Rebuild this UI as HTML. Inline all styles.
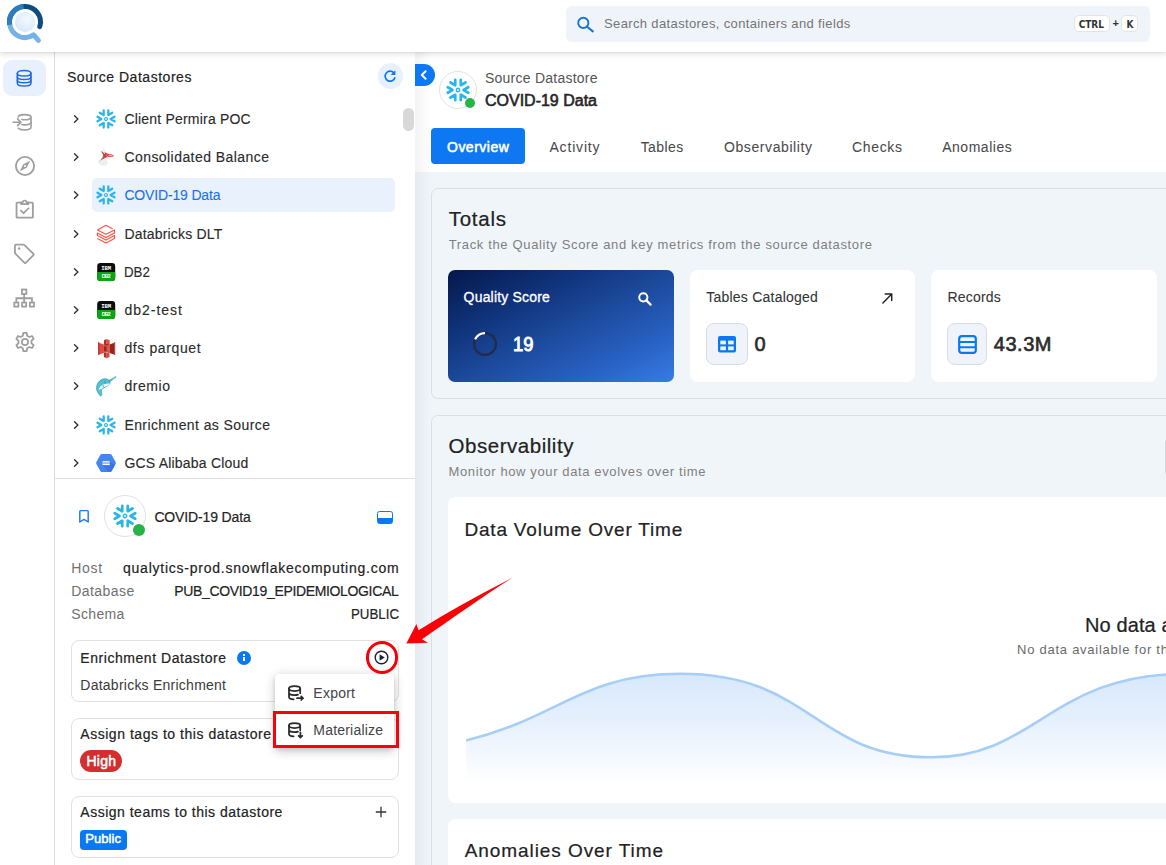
<!DOCTYPE html>
<html lang="en">
<head>
<meta charset="utf-8">
<title>COVID-19 Data - Source Datastore</title>
<style>
*{box-sizing:border-box;margin:0;padding:0}
html,body{width:1166px;height:865px;overflow:hidden;background:#f0f5fa}
body{position:relative;font-family:"Liberation Sans",sans-serif;color:#222;font-size:14px}
.abs{position:absolute}
.t{position:absolute;white-space:nowrap;line-height:20px;height:20px}
svg{position:absolute;overflow:visible}
/* main area */
#main{left:415px;top:52px;width:751px;height:813px;background:#f0f5fa;overflow:hidden}
#mainhead{left:0;top:0;width:751px;height:120px;background:#fff}
#edge{left:0;top:0;width:16px;height:813px;background:linear-gradient(90deg,rgba(120,130,150,.09),rgba(120,130,150,0))}
.card{border:1px solid #d9dfe7;border-radius:7px;background:#f0f5fa}
.wcard{background:#fff;border-radius:8px}
.ibox{background:#f0f4fa;border:1px solid #d6dce4;border-radius:8px}
/* header */
#header{left:0;top:0;width:1166px;height:52px;background:#fff;box-shadow:0 2px 6px rgba(0,0,0,.13),0 0 2px rgba(0,0,0,.10);z-index:20}
#search{left:566px;top:6px;width:584px;height:36px;background:#eff4fa;border-radius:6px}
.kbd{background:#fff;border:1px solid #e3e3e3;border-radius:5px;height:17px}
/* nav */
#nav{left:0;top:52px;width:55px;height:813px;background:#fff;border-right:1px solid #dcdcdc;z-index:10}
#navact{left:3px;top:8px;width:43px;height:36px;border-radius:9px;background:#e9f0fd}
/* tree panel */
#panel{left:55px;top:52px;width:360px;height:813px;background:#fff;z-index:9}
#sel{left:37px;top:126px;width:303px;height:34px;border-radius:5px;background:#e9f1fd}
#refresh{left:323px;top:11px;width:25px;height:26px;border-radius:13px;background:#e9f0fd}
#thumb{left:348px;top:56px;width:11px;height:23px;border-radius:6px;background:#d8d8d8}
#divider{left:0;top:426px;width:360px;height:1px;background:#e0e0e0}
.pcard{left:16px;width:328px;height:62px;border:1px solid #e2e2e2;border-radius:8px;background:#fff}
#menu{left:220px;top:622px;width:119px;height:74px;background:#fff;border-radius:4px;box-shadow:0 2px 4px -1px rgba(0,0,0,.16),0 4px 10px 1px rgba(0,0,0,.10),0 1px 12px 2px rgba(0,0,0,.08)}
#redrect{left:218px;top:659px;width:126px;height:37.3px;border:3.7px solid #fb0007}
#redcirc{left:310.5px;top:589px;width:32.5px;height:32.5px;border:3.2px solid #f40009;border-radius:50%}
.chev{width:7px;height:10px}
</style>
</head>
<body>

<!-- ================= MAIN CONTENT ================= -->
<div id="main" class="abs">
  <div id="mainhead" class="abs"></div>
  <div id="edge" class="abs"></div>
    <!-- collapse handle -->
  <div class="abs" style="left:0;top:12px;width:20px;height:22px;border-radius:0 11px 11px 0;background:#0d78f2"></div>
  <svg style="left:3px;top:17px" width="12" height="12" viewBox="0 0 12 12"><path d="M7.6 2.2 L3.8 6 L7.6 9.8" fill="none" stroke="#fff" stroke-width="2" stroke-linecap="round" stroke-linejoin="round"/></svg>
  <!-- datastore avatar -->
  <div class="abs" style="left:24px;top:19px;width:38px;height:38px;border-radius:50%;border:1px solid #e2e2e2;background:#fff"></div>
  <svg style="left:31px;top:26px" width="24" height="24" viewBox="-12 -12 24 24"><use href="#snow"/></svg>
  <div class="abs" style="left:49.5px;top:45.5px;width:10px;height:10px;border-radius:50%;background:#27b447"></div>
  <!-- active tab -->
  <div class="abs" style="left:16px;top:76px;width:94px;height:36px;border-radius:4px;background:#0d78f2"></div>

  <!-- Totals card -->
  <div class="abs card" style="left:16px;top:136px;width:780px;height:211px"></div>
  <div class="abs" style="left:33px;top:218px;width:226px;height:112px;border-radius:7px;background:linear-gradient(to bottom right,#06174c 0%,#10347c 30%,#1c4a9c 52%,#2862c4 78%,#377ce6 100%)"></div>
  <svg style="left:222px;top:239px" width="16" height="16" viewBox="0 0 16 16"><circle cx="6.3" cy="6.3" r="4.1" fill="none" stroke="#fff" stroke-width="2"/><path d="M9.4 9.4 L13.6 13.6" stroke="#fff" stroke-width="2.2" stroke-linecap="round"/></svg>
  <svg style="left:57px;top:278.7px" width="26" height="26" viewBox="-13 -13 26 26"><circle r="10.9" fill="none" stroke="#232b4b" stroke-width="2.2"/><path d="M0 -10.9 A10.9 10.9 0 0 0 -9.9 -4.6" fill="none" stroke="#fff" stroke-width="2.2"/></svg>

  <div class="abs wcard" style="left:275px;top:218px;width:225px;height:112px"></div>
  <div class="abs ibox" style="left:291px;top:271px;width:42px;height:42px"></div>
  <svg style="left:303px;top:283.5px" width="18" height="17" viewBox="0 0 18 17"><rect x="0" y="0" width="18" height="16.5" rx="2" fill="#0b77f2"/><rect x="2.3" y="4.6" width="5.6" height="3.8" fill="#eef4fb"/><rect x="10.1" y="4.6" width="5.6" height="3.8" fill="#eef4fb"/><rect x="2.3" y="10.4" width="5.6" height="3.8" fill="#eef4fb"/><rect x="10.1" y="10.4" width="5.6" height="3.8" fill="#eef4fb"/></svg>
  <svg style="left:466.6px;top:241.3px" width="10.8" height="10.8" viewBox="0 0 12 12"><path d="M1 11 L10.6 1.4 M3.6 1.2 L10.8 1.2 L10.8 8.4" fill="none" stroke="#222" stroke-width="1.6" stroke-linecap="round" stroke-linejoin="round"/></svg>

  <div class="abs wcard" style="left:516px;top:218px;width:226px;height:112px"></div>
  <div class="abs ibox" style="left:532px;top:271px;width:40px;height:42px"></div>
  <svg style="left:542.5px;top:282.5px" width="19" height="19" viewBox="0 0 19 19"><rect x="1.2" y="1.2" width="16.6" height="16.6" rx="2.6" fill="none" stroke="#0b77f2" stroke-width="2.2"/><path d="M1.5 7 H17.5 M1.5 12.2 H17.5" stroke="#0b77f2" stroke-width="2"/></svg>
  <div class="abs wcard" style="left:758px;top:218px;width:226px;height:112px"></div>

  <!-- Observability card -->
  <div class="abs card" style="left:16px;top:363px;width:780px;height:520px"></div>
  <div class="abs" style="left:750px;top:385.5px;width:30px;height:38px;border:1px solid #d4d9e0;border-radius:4px;background:#f0f5fa"></div>
  <div class="abs wcard" style="left:33px;top:445px;width:760px;height:305.5px"></div>
  <svg style="left:0;top:600px" width="751" height="140" viewBox="415 652 751 140">
    <defs><linearGradient id="fillg" x1="0" y1="0" x2="0" y2="1"><stop offset="0" stop-color="#d7e8fc"/><stop offset="0.5" stop-color="#e9f2fd"/><stop offset="1" stop-color="#ffffff"/></linearGradient></defs>
    <path d="M466.2 740.4 C558.8 718 582.1 673.8 680 673.8 C813.4 673.8 813.6 757.3 932 757.3 C1036.6 757.3 1050.1 673.8 1185.5 673.8 L1185.5 784 L466.2 784 Z" fill="url(#fillg)"/>
    <path d="M466.2 740.4 C558.8 718 582.1 673.8 680 673.8 C813.4 673.8 813.6 757.3 932 757.3 C1036.6 757.3 1050.1 673.8 1185.5 673.8" fill="none" stroke="#a7cef7" stroke-width="2.6"/>
  </svg>
  <div class="abs wcard" style="left:33px;top:767px;width:760px;height:120px"></div>
</div>

<!-- ================= TREE PANEL ================= -->
<div id="panel" class="abs">
    <div id="sel" class="abs"></div>
  <div id="refresh" class="abs"></div>
  <svg style="left:327.9px;top:16.6px" width="14" height="14" viewBox="0 0 14 14"><path d="M11.2 4.3 A5 5 0 1 0 12 8.3" fill="none" stroke="#0b78f2" stroke-width="1.7"/><path d="M12.4 1.2 L12.4 6 L7.6 6 Z" fill="#0b78f2"/></svg>
  <div id="thumb" class="abs"></div>
  <div id="divider" class="abs"></div>
  <svg style="left:17.6px;top:62.0px" width="8" height="10" viewBox="0 0 8 10"><path d="M1.5 1.7 L4.9 5 L1.5 8.3" fill="none" stroke="#333" stroke-width="1.4" stroke-linecap="round" stroke-linejoin="round"/></svg>
  <svg style="left:17.6px;top:100.2px" width="8" height="10" viewBox="0 0 8 10"><path d="M1.5 1.7 L4.9 5 L1.5 8.3" fill="none" stroke="#333" stroke-width="1.4" stroke-linecap="round" stroke-linejoin="round"/></svg>
  <svg style="left:17.6px;top:138.4px" width="8" height="10" viewBox="0 0 8 10"><path d="M1.5 1.7 L4.9 5 L1.5 8.3" fill="none" stroke="#333" stroke-width="1.4" stroke-linecap="round" stroke-linejoin="round"/></svg>
  <svg style="left:17.6px;top:176.6px" width="8" height="10" viewBox="0 0 8 10"><path d="M1.5 1.7 L4.9 5 L1.5 8.3" fill="none" stroke="#333" stroke-width="1.4" stroke-linecap="round" stroke-linejoin="round"/></svg>
  <svg style="left:17.6px;top:214.8px" width="8" height="10" viewBox="0 0 8 10"><path d="M1.5 1.7 L4.9 5 L1.5 8.3" fill="none" stroke="#333" stroke-width="1.4" stroke-linecap="round" stroke-linejoin="round"/></svg>
  <svg style="left:17.6px;top:253.0px" width="8" height="10" viewBox="0 0 8 10"><path d="M1.5 1.7 L4.9 5 L1.5 8.3" fill="none" stroke="#333" stroke-width="1.4" stroke-linecap="round" stroke-linejoin="round"/></svg>
  <svg style="left:17.6px;top:291.2px" width="8" height="10" viewBox="0 0 8 10"><path d="M1.5 1.7 L4.9 5 L1.5 8.3" fill="none" stroke="#333" stroke-width="1.4" stroke-linecap="round" stroke-linejoin="round"/></svg>
  <svg style="left:17.6px;top:329.4px" width="8" height="10" viewBox="0 0 8 10"><path d="M1.5 1.7 L4.9 5 L1.5 8.3" fill="none" stroke="#333" stroke-width="1.4" stroke-linecap="round" stroke-linejoin="round"/></svg>
  <svg style="left:17.6px;top:367.6px" width="8" height="10" viewBox="0 0 8 10"><path d="M1.5 1.7 L4.9 5 L1.5 8.3" fill="none" stroke="#333" stroke-width="1.4" stroke-linecap="round" stroke-linejoin="round"/></svg>
  <svg style="left:17.6px;top:405.8px" width="8" height="10" viewBox="0 0 8 10"><path d="M1.5 1.7 L4.9 5 L1.5 8.3" fill="none" stroke="#333" stroke-width="1.4" stroke-linecap="round" stroke-linejoin="round"/></svg>
  <svg style="left:41px;top:57.0px" width="20" height="20" viewBox="-12 -12 24 24"><use href="#snow"/></svg>
  <svg style="left:41px;top:95.2px" width="20" height="20" viewBox="0 0 20 20"><path d="M6.6 2 C8.4 1.6 9.6 3 9.4 5 L8.8 11 C10.4 12.4 11.6 14 11.8 16.2 C11.4 18 9 18.8 6.6 18.4 C4 18 2 16.4 2 14.4 C2.6 13.4 4.4 11.6 6 10 Z" fill="#e3eaee" opacity=".75"/><path d="M4.6 3.6 C6.2 5.2 8 6.2 10.4 6.6 C13 6.9 15.8 7.3 18 8.4 C18.3 9.3 16.6 9.9 14.4 10 C12.4 10 10.6 10.2 9 11 C7 12 5.2 13.2 3.6 14 C5.4 12 6.8 10.2 7.6 8.4 C6.6 7 5.4 5.4 4.6 3.6Z" fill="#cf3a38" opacity=".9"/><circle cx="9.3" cy="7.9" r="2.3" fill="#cf3a38" opacity=".85"/><path d="M13 7.6 C15 7.8 17 8.2 17.4 8.8 C17 9.4 15 9.4 12.6 9.2 Z" fill="#fff" opacity=".55"/><circle cx="8.4" cy="6.4" r=".55" fill="#fff" opacity=".8"/><circle cx="10.6" cy="8" r=".5" fill="#fff" opacity=".7"/><circle cx="11.4" cy="9.6" r=".5" fill="#fff" opacity=".7"/></svg>
  <svg style="left:41px;top:133.4px" width="20" height="20" viewBox="-12 -12 24 24"><use href="#snow"/></svg>
  <svg style="left:41px;top:171.6px" width="20" height="20" viewBox="0 0 20 20"><g fill="none" stroke="#ff4433" stroke-width="1.15" stroke-linejoin="round" opacity=".92"><path d="M16.6 4.8 L9.9 1.3 L1.5 5.9 L9.9 10.3 L18.5 5.9 V9 L9.9 13.5 L1.4 9 V11.6 L9.9 16.1 L18.5 11.6 V14.5 L9.9 19.1 L1.4 14.5"/></g></svg>
  <svg style="left:41px;top:209.8px" width="20" height="20" viewBox="0 0 20 20"><rect x="1.2" y="1" width="18" height="18" rx="3.2" fill="#0c0c0c"/><path d="M1.2 10 H19.2 V15.8 A3.2 3.2 0 0 1 16 19 H4.4 A3.2 3.2 0 0 1 1.2 15.8 Z" fill="#0aa512"/><text x="10.2" y="8.1" font-family="Liberation Mono, monospace" font-weight="700" font-size="5.6" fill="#fff" text-anchor="middle" textLength="10">IBM</text><text x="10.2" y="16.3" font-family="Liberation Sans, sans-serif" font-weight="700" font-size="5.2" fill="#fff" text-anchor="middle" textLength="9">DB2</text></svg>
  <svg style="left:41px;top:248.0px" width="20" height="20" viewBox="0 0 20 20"><rect x="1.2" y="1" width="18" height="18" rx="3.2" fill="#0c0c0c"/><path d="M1.2 10 H19.2 V15.8 A3.2 3.2 0 0 1 16 19 H4.4 A3.2 3.2 0 0 1 1.2 15.8 Z" fill="#0aa512"/><text x="10.2" y="8.1" font-family="Liberation Mono, monospace" font-weight="700" font-size="5.6" fill="#fff" text-anchor="middle" textLength="10">IBM</text><text x="10.2" y="16.3" font-family="Liberation Sans, sans-serif" font-weight="700" font-size="5.2" fill="#fff" text-anchor="middle" textLength="9">DB2</text></svg>
  <svg style="left:41px;top:286.2px" width="20" height="21" viewBox="0 0 20 21"><path d="M2.1 4.5 L7.9 6.5 V14.9 L2.1 16.8 Z" fill="#de4a3f"/><path d="M2.1 4.5 L3.3 4.1 V17.2 L2.1 16.8 Z" fill="#b7352c"/><path d="M19.1 4.5 L13.4 6.5 V14.9 L19.1 16.8 Z" fill="#8a2a20"/><path d="M19.1 4.5 L18 4.1 V17.2 L19.1 16.8 Z" fill="#cf4338"/><rect x="7.9" y="6" width="5.6" height="9" fill="#d9483d"/><path d="M7.9 2.2 L10.7 0.9 V6.2 H7.9 Z" fill="#a8322a"/><path d="M13.7 2.2 L10.7 0.9 V6.2 H13.7 Z" fill="#e24c41"/><path d="M7.9 6.2 H13.7 L10.7 6.9 Z" fill="#7a2219"/><path d="M7.9 14.9 H10.7 V20.3 L7.9 19 Z" fill="#a8322a"/><path d="M13.5 14.9 H10.7 V20.3 L13.5 19 Z" fill="#d9483d"/><path d="M7.9 14.9 L10.7 14.3 L13.5 14.9 Z" fill="#f3b8b2"/><rect x="7.9" y="8.4" width="2.8" height="4.6" fill="#8a2a20"/><rect x="10.7" y="8.4" width="2.8" height="4.6" fill="#e5544a"/></svg>
  <svg style="left:41px;top:324.4px" width="20" height="21" viewBox="0 0 20 21"><path d="M12.6 4.6 L19.9 0.4 L20.2 1 L13.8 6 Z" fill="#4fc3d6" stroke="#3a8fa2" stroke-width=".4"/><path d="M13.1 4.3 C11 2.4 7 2 3.8 4.8 C0.2 8 -0.2 12.5 1.4 15.8 C2.3 17.6 3.6 19 4.7 20.2 C5.6 19.5 6 18.6 5.7 17.4 C5.5 16 5.2 15 5.6 13.6 C6.4 12.4 8 11.8 9.6 10.9 C11.4 10 13 9 13.8 7.6 C14.1 6.8 13.9 5.6 13.1 4.3 Z" fill="#4fc3d6" stroke="#2f7f92" stroke-width=".55"/><path d="M2.6 14.2 C3 11.4 5.2 9.2 8 8.2 C10 7.6 12 7.6 13.6 7.4 C13 9 11 10 9.2 10.8 C7.6 11.5 6 12.2 5.2 13.4 C4.4 13 3.4 13.4 2.6 14.2 Z" fill="#f2fbfc"/><path d="M6.2 9.6 L8 9.4 L7.6 11.4 Z" fill="#3aa9bd"/><circle cx="9" cy="6.1" r=".6" fill="#2a7485"/></svg>
  <svg style="left:41px;top:362.6px" width="20" height="20" viewBox="-12 -12 24 24"><use href="#snow"/></svg>
  <svg style="left:41px;top:400.8px" width="20" height="20" viewBox="0 0 20 20"><path d="M5.7 1 H14.3 Q15.2 1 15.7 1.9 L19.6 9 Q20.1 10 19.6 11 L15.7 18.1 Q15.2 19 14.3 19 H5.7 Q4.8 19 4.3 18.1 L0.4 11 Q-0.1 10 0.4 9 L4.3 1.9 Q4.8 1 5.7 1Z" fill="#4485f3"/><path d="M13.7 8.2 L18.9 12.2 L15.7 18.1 Q15.2 19 14.3 19 H12.6 L6.5 12.1 H13.7Z" fill="#3a73dc" opacity=".8"/><rect x="6.5" y="8.2" width="7.2" height="1.35" fill="#fff"/><rect x="6.5" y="10.75" width="7.2" height="1.35" fill="#fff"/><rect x="6.5" y="9.55" width="7.2" height="1.2" fill="#a9c6f7"/></svg>
  <!-- selected datastore summary -->
  <svg style="left:22.7px;top:456.6px" width="13" height="15" viewBox="0 0 13 15"><path d="M1.8 2.6 Q1.8 1.6 2.8 1.6 H9.2 Q10.2 1.6 10.2 2.6 V13 L6 10.4 L1.8 13 Z" fill="none" stroke="#1f78f5" stroke-width="1.45" stroke-linejoin="round"/></svg>
  <div class="abs" style="left:49px;top:443px;width:42px;height:42px;border-radius:50%;border:1px solid #e2e2e2;background:#fff"></div>
  <svg style="left:58px;top:452px" width="24" height="24" viewBox="-12 -12 24 24"><use href="#snow"/></svg>
  <div class="abs" style="left:77.7px;top:471.7px;width:12.6px;height:12.6px;border-radius:50%;background:#27b447"></div>
  <div class="abs" style="left:321.8px;top:458.9px;width:16.6px;height:13.2px;border:1.7px solid #0678f0;border-radius:2.5px;background:linear-gradient(#fff 0,#fff 58%,#0678f0 58%)"></div>
  <div class="abs pcard" style="top:588px"></div>
  <div class="abs pcard" style="top:666px"></div>
  <div class="abs pcard" style="top:744px"></div>
  <!-- info icon -->
  <div class="abs" style="left:181.7px;top:598.5px;width:14.2px;height:14.2px;border-radius:50%;background:#0a78f2"></div>
  <div class="abs" style="left:187.9px;top:602px;width:1.9px;height:1.7px;background:#fff"></div>
  <div class="abs" style="left:187.9px;top:605.1px;width:1.9px;height:4.1px;background:#fff"></div>
  <!-- play icon -->
  <svg style="left:318px;top:597px" width="17" height="17" viewBox="-8.5 -8.5 17 17"><circle r="6.3" fill="none" stroke="#1c2030" stroke-width="1.4"/><path d="M-1.9 -3.2 L3.2 0 L-1.9 3.2 Z" fill="#1c2030"/></svg>
  <!-- chips -->
  <div class="abs" style="left:25px;top:698px;width:42px;height:22px;border-radius:11px;background:#d32f2f"></div>
  <div class="abs" style="left:25px;top:778.3px;width:47px;height:19.5px;border-radius:4px;background:#0a78f2"></div>
  <svg style="left:320px;top:754px" width="12" height="12" viewBox="0 0 12 12"><path d="M6 0.8 V11.2 M0.8 6 H11.2" stroke="#333" stroke-width="1.3"/></svg>
  <!-- popup menu -->
  <div id="menu" class="abs"></div>
  <svg style="left:232px;top:632.5px" width="18" height="17" viewBox="0 0 18 17"><g fill="none" stroke="#2a2a2a" stroke-width="1.75" stroke-linecap="round"><ellipse cx="7.6" cy="3.6" rx="5.6" ry="2.4"/><path d="M2 3.6 V12 C2 13.3 4 14.2 6.6 14.4 M13.2 3.6 V8.2 M2 7.8 C2 9.1 4.4 10.1 7.6 10.1 C8.8 10.1 10 10 11 9.6"/><path d="M10 13.2 H16 M14.2 11.4 L16 13.2 L14.2 15"/></g></svg>
  <svg style="left:232px;top:669.5px" width="18" height="17" viewBox="0 0 18 17"><g fill="none" stroke="#2a2a2a" stroke-width="1.75" stroke-linecap="round"><ellipse cx="7.6" cy="3.6" rx="5.6" ry="2.4"/><path d="M2 3.6 V12 C2 13.3 4 14.2 6.6 14.4 M13.2 3.6 V8.2 M2 7.8 C2 9.1 4.4 10.1 7.6 10.1 C8.8 10.1 10 10 11 9.6"/><path d="M13.4 10.4 V15.6 M11.6 13.8 L13.4 15.6 L15.2 13.8"/></g></svg>
</div>

<!-- ================= NAV ================= -->
<div id="nav" class="abs">
  <div id="navact" class="abs"></div>
    <!-- datastores (active) -->
  <svg style="left:14.3px;top:15.7px" width="20.3" height="20.3" viewBox="0 0 22 22"><g fill="none" stroke="#1a6be0" stroke-width="1.65" stroke-linecap="round"><ellipse cx="11" cy="5.6" rx="7.4" ry="3"/><path d="M3.6 5.6 V16.4 C3.6 18.1 6.9 19.4 11 19.4 C15.1 19.4 18.4 18.1 18.4 16.4 V5.6"/><path d="M3.6 9.4 C3.6 11.1 6.9 12.4 11 12.4 C15.1 12.4 18.4 11.1 18.4 9.4 M3.6 13 C3.6 14.7 6.9 16 11 16 C15.1 16 18.4 14.7 18.4 13"/></g></svg>
  <!-- enrichment datastores -->
  <svg style="left:12.4px;top:59.5px" width="20.5" height="20.5" viewBox="0 0 22 22"><g fill="none" stroke="#9e9e9e" stroke-width="1.7" stroke-linecap="round" stroke-linejoin="round"><path d="M6.6 5.4 C6.8 3.8 9.8 2.8 13.4 2.8 C17.4 2.8 20.4 4 20.4 5.6 C20.4 7.2 17.4 8.4 13.4 8.4 C12.4 8.4 11.4 8.3 10.6 8.1"/><path d="M20.4 5.6 V16.4 C20.4 18 17.4 19.2 13.4 19.2 C10.4 19.2 7.8 18.5 6.8 17.4"/><path d="M20.4 11 C20.4 12.6 17.4 13.8 13.4 13.8 C12.4 13.8 11.4 13.7 10.6 13.5"/><path d="M1.2 11 H9.4 M6 7.4 L9.6 11 L6 14.6"/></g></svg>
  <!-- explore -->
  <svg style="left:13.9px;top:103px" width="22" height="22" viewBox="0 0 22 22"><circle cx="11" cy="11" r="9.1" fill="none" stroke="#9e9e9e" stroke-width="1.85"/><path d="M16.2 5.8 L12.7 12.7 L5.8 16.2 L9.3 9.3 Z" fill="#9e9e9e"/><circle cx="11" cy="11" r="1.05" fill="#fff"/></svg>
  <!-- checks -->
  <svg style="left:13.8px;top:146.8px" width="21.4" height="20.4" viewBox="0 0 22 22" preserveAspectRatio="none"><g fill="none" stroke="#9e9e9e" stroke-width="1.85" stroke-linejoin="round"><path d="M7.4 3.8 H3.4 Q2.6 3.8 2.6 4.6 V19.4 Q2.6 20.2 3.4 20.2 H18.6 Q19.4 20.2 19.4 19.4 V4.6 Q19.4 3.8 18.6 3.8 H14.6"/><path d="M7.4 5.6 V3.6 H9 C9 2.4 9.8 1.6 11 1.6 C12.2 1.6 13 2.4 13 3.6 H14.6 V5.6 Z"/><path d="M7 12.6 L9.8 15.2 L15 10" stroke-linecap="round"/></g></svg>
  <!-- tags -->
  <svg style="left:13px;top:190px" width="23" height="23" viewBox="0 0 23 23"><path d="M1.9 3.6 Q1.9 2.6 2.9 2.6 H10.4 Q11 2.6 11.5 3.1 L20.4 11.9 Q21 12.5 20.4 13.1 L12.7 20.9 Q12.1 21.5 11.5 20.9 L2.4 11.7 Q1.9 11.2 1.9 10.6 Z" fill="none" stroke="#9e9e9e" stroke-width="1.8" stroke-linejoin="round"/><circle cx="6.1" cy="6.6" r="1.25" fill="#9e9e9e"/></svg>
  <!-- org chart -->
  <svg style="left:13.45px;top:235.5px" width="22.3" height="20.5" viewBox="0 0 24 22"><g fill="none" stroke="#9e9e9e" stroke-width="1.9"><rect x="9.6" y="1.6" width="4.8" height="4.8"/><rect x="1.4" y="15.6" width="4.4" height="4.4"/><rect x="9.8" y="15.6" width="4.4" height="4.4"/><rect x="18.2" y="15.6" width="4.4" height="4.4"/><path d="M12 6.4 V15.6 M3.6 15.6 V11 H20.4 V15.6"/></g></svg>
  <!-- settings -->
  <svg style="left:13.75px;top:279px" width="22" height="22" viewBox="-11 -11 22 22"><g fill="none" stroke="#9e9e9e" stroke-width="1.75" stroke-linejoin="round"><circle r="3.1"/><path d="M2.15 -6.24 L1.68 -9.05 L-1.68 -9.05 L-2.15 -6.24 L-4.33 -4.98 L-7.00 -5.97 L-8.67 -3.07 L-6.48 -1.26 L-6.48 1.26 L-8.67 3.07 L-7.00 5.97 L-4.33 4.98 L-2.15 6.24 L-1.68 9.05 L1.68 9.05 L2.15 6.24 L4.33 4.98 L7.00 5.97 L8.67 3.07 L6.48 1.26 L6.48 -1.26 L8.67 -3.07 L7.00 -5.97 L4.33 -4.98 Z"/></g></svg>
</div>

<!-- ================= HEADER ================= -->
<div id="header" class="abs">
    <!-- logo -->
  <svg style="left:0;top:0" width="52" height="52" viewBox="0 0 52 52">
    <defs><radialGradient id="lg" cx="0.6" cy="0.35" r="0.75"><stop offset="0" stop-color="#f4f9fe"/><stop offset="1" stop-color="#d3e7f9"/></radialGradient></defs>
    <circle cx="25" cy="22" r="10.2" fill="url(#lg)"/>
    <g fill="none" stroke-width="5">
      <path d="M9.65 24.2 A15.5 15.5 0 0 0 33.6 34.9 L38.4 40.4" stroke="#76b3e5" stroke-linecap="round" stroke-linejoin="round"/>
      <path d="M9.65 24.6 A15.5 15.5 0 0 1 24 6.53" stroke="#2d7cbe"/>
      <path d="M23.4 6.58 A15.5 15.5 0 0 1 39.8 26.6" stroke="#0f4c81" stroke-linecap="round"/>
      <path d="M9.65 24.6 A15.5 15.5 0 0 1 23.6 6.56" stroke="#2d7cbe"/>
    </g>
  </svg>
  <div id="search" class="abs"></div>
  <svg style="left:576px;top:15.5px" width="19" height="17" viewBox="0 0 19 17"><circle cx="7.3" cy="6.9" r="5.1" fill="none" stroke="#1976d2" stroke-width="1.9"/><path d="M11.1 10.7 L16.8 15.4" stroke="#1976d2" stroke-width="2.1" stroke-linecap="round"/></svg>
  <div class="abs kbd" style="left:1073.5px;top:15.2px;width:36px"></div>
  <div class="abs kbd" style="left:1121px;top:15.2px;width:16.6px"></div>
</div>

<!-- ================= OVERLAYS ================= -->
<svg width="0" height="0" style="left:0;top:0"><defs>
  <g id="snow" fill="none" stroke="#29b5e8" stroke-linecap="round" stroke-linejoin="round">
    <path id="arm" stroke-width="2.7" d="M10.26 -2.75 L5.5 0 L10.26 2.75"/>
    <use href="#arm" transform="rotate(60)"/><use href="#arm" transform="rotate(120)"/><use href="#arm" transform="rotate(180)"/><use href="#arm" transform="rotate(240)"/><use href="#arm" transform="rotate(300)"/>
    <circle r="1.75" stroke-width="1.3" fill="#d9f1fb"/>
  </g>
</defs></svg>
<!-- annotation: red arrow, circle, rectangle -->
<svg style="left:0;top:0;z-index:40;pointer-events:none" width="1166" height="865" viewBox="0 0 1166 865">
  <path d="M512.8 577.5 C480 594 446 613 418.6 630.2 L416.4 624 L406.3 643.6 L428 642.7 L422 639.2 C450 620 482 597 512.8 577.5 Z" fill="#fb0007"/>
</svg>
<div id="redcirc" class="abs" style="left:365.5px;top:641px;z-index:40"></div>
<div id="redrect" class="abs" style="left:273px;top:711px;z-index:40"></div>

<!-- ================= TEXT ================= -->
<div class="abs" style="left:0;top:0;width:1166px;height:865px;z-index:30;overflow:hidden">
<span class="t" style="left:604.0px;top:14.0px;font-size:13px;color:#757575;letter-spacing:0.367px">Search datastores, containers and fields</span>
<span class="t" style="left:67.0px;top:67.3px;font-size:14px;color:#222;letter-spacing:0.528px;-webkit-text-stroke:0.18px #222">Source Datastores</span>
<span class="t" style="left:124.4px;top:108.9px;font-size:14px;color:#2a2a2a;letter-spacing:0.199px;-webkit-text-stroke:0.12px #2a2a2a">Client Permira POC</span>
<span class="t" style="left:124.4px;top:147.1px;font-size:14px;color:#2a2a2a;letter-spacing:0.441px;-webkit-text-stroke:0.12px #2a2a2a">Consolidated Balance</span>
<span class="t" style="left:124.4px;top:185.3px;font-size:14px;color:#1a73e8;letter-spacing:-0.162px;-webkit-text-stroke:0.1px #1a73e8">COVID-19 Data</span>
<span class="t" style="left:124.4px;top:223.5px;font-size:14px;color:#2a2a2a;letter-spacing:0.189px;-webkit-text-stroke:0.12px #2a2a2a">Databricks DLT</span>
<span class="t" style="left:124.4px;top:261.7px;font-size:14px;color:#2a2a2a;letter-spacing:0.000px;display:inline-block;transform-origin:0 50%;transform:scaleX(0.9473);-webkit-text-stroke:0.12px #2a2a2a">DB2</span>
<span class="t" style="left:124.4px;top:299.9px;font-size:14px;color:#2a2a2a;letter-spacing:1.001px;-webkit-text-stroke:0.12px #2a2a2a">db2-test</span>
<span class="t" style="left:124.4px;top:338.1px;font-size:14px;color:#2a2a2a;letter-spacing:0.614px;-webkit-text-stroke:0.12px #2a2a2a">dfs parquet</span>
<span class="t" style="left:124.4px;top:376.3px;font-size:14px;color:#2a2a2a;letter-spacing:0.561px;-webkit-text-stroke:0.12px #2a2a2a">dremio</span>
<span class="t" style="left:124.4px;top:414.5px;font-size:14px;color:#2a2a2a;letter-spacing:0.414px;-webkit-text-stroke:0.12px #2a2a2a">Enrichment as Source</span>
<span class="t" style="left:124.4px;top:452.7px;font-size:14px;color:#2a2a2a;letter-spacing:0.204px;-webkit-text-stroke:0.12px #2a2a2a">GCS Alibaba Cloud</span>
<span class="t" style="left:154.4px;top:506.9px;font-size:14px;color:#222;letter-spacing:-0.146px;-webkit-text-stroke:0.18px #222">COVID-19 Data</span>
<span class="t" style="left:71.3px;top:558.0px;font-size:14px;color:#707070;letter-spacing:0.701px">Host</span>
<span class="t" style="left:123.0px;top:558.0px;font-size:14px;color:#222;letter-spacing:0.763px;-webkit-text-stroke:0.18px #222">qualytics-prod.snowflakecomputing.com</span>
<span class="t" style="left:71.3px;top:580.9px;font-size:14px;color:#707070;letter-spacing:0.423px">Database</span>
<span class="t" style="left:174.3px;top:580.9px;font-size:14px;color:#222;letter-spacing:-0.347px;-webkit-text-stroke:0.18px #222">PUB_COVID19_EPIDEMIOLOGICAL</span>
<span class="t" style="left:71.3px;top:603.7px;font-size:14px;color:#707070;letter-spacing:0.348px">Schema</span>
<span class="t" style="left:350.7px;top:603.7px;font-size:14px;color:#222;letter-spacing:0.000px;display:inline-block;transform-origin:0 50%;transform:scaleX(0.9490);-webkit-text-stroke:0.18px #222">PUBLIC</span>
<span class="t" style="left:80.3px;top:648.4px;font-size:14px;color:#222;letter-spacing:0.547px;-webkit-text-stroke:0.2px #222">Enrichment Datastore</span>
<span class="t" style="left:80.3px;top:675.1px;font-size:14px;color:#3a3a3a;letter-spacing:0.244px">Databricks Enrichment</span>
<span class="t" style="left:80.3px;top:723.9px;font-size:14px;color:#222;letter-spacing:0.529px;-webkit-text-stroke:0.2px #222">Assign tags to this datastore</span>
<span class="t" style="left:86.5px;top:750.7px;font-size:14px;color:#fff;letter-spacing:0.234px;-webkit-text-stroke:0.5px #fff">High</span>
<span class="t" style="left:80.3px;top:801.7px;font-size:14px;color:#222;letter-spacing:0.502px;-webkit-text-stroke:0.2px #222">Assign teams to this datastore</span>
<span class="t" style="left:85.2px;top:829.3px;font-size:13px;color:#fff;letter-spacing:0.076px;-webkit-text-stroke:0.5px #fff">Public</span>
<span class="t" style="left:313.3px;top:683.0px;font-size:14px;color:#444;letter-spacing:0.246px">Export</span>
<span class="t" style="left:313.3px;top:719.6px;font-size:14px;color:#444;letter-spacing:0.200px">Materialize</span>
<span class="t" style="left:485.0px;top:67.9px;font-size:14px;color:#555;letter-spacing:0.236px">Source Datastore</span>
<span class="t" style="left:485.0px;top:90.5px;font-size:16px;color:#262626;letter-spacing:-0.004px;-webkit-text-stroke:0.6px #262626">COVID-19 Data</span>
<span class="t" style="left:447.0px;top:137.1px;font-size:14px;color:#fff;letter-spacing:0.492px;-webkit-text-stroke:0.55px #fff">Overview</span>
<span class="t" style="left:549.4px;top:137.1px;font-size:14px;color:#4a4a4a;letter-spacing:0.837px;-webkit-text-stroke:0.05px #4a4a4a">Activity</span>
<span class="t" style="left:640.7px;top:137.1px;font-size:14px;color:#4a4a4a;letter-spacing:0.406px;-webkit-text-stroke:0.05px #4a4a4a">Tables</span>
<span class="t" style="left:724.0px;top:137.1px;font-size:14px;color:#4a4a4a;letter-spacing:0.590px;-webkit-text-stroke:0.05px #4a4a4a">Observability</span>
<span class="t" style="left:852.0px;top:137.1px;font-size:14px;color:#4a4a4a;letter-spacing:0.662px;-webkit-text-stroke:0.05px #4a4a4a">Checks</span>
<span class="t" style="left:942.2px;top:137.1px;font-size:14px;color:#4a4a4a;letter-spacing:0.516px;-webkit-text-stroke:0.05px #4a4a4a">Anomalies</span>
<span class="t" style="left:448.7px;top:209.2px;font-size:20.5px;color:#222;letter-spacing:0.748px;-webkit-text-stroke:0.22px #222">Totals</span>
<span class="t" style="left:448.7px;top:235.0px;font-size:13px;color:#808080;letter-spacing:0.649px">Track the Quality Score and key metrics from the source datastore</span>
<span class="t" style="left:463.6px;top:287.1px;font-size:14px;color:#fff;letter-spacing:0.179px;-webkit-text-stroke:0.32px #fff">Quality Score</span>
<span class="t" style="left:512.5px;top:334.1px;font-size:20px;color:#fff;letter-spacing:0.000px;display:inline-block;transform-origin:0 50%;transform:scaleX(0.9213);-webkit-text-stroke:0.9px #fff">19</span>
<span class="t" style="left:706.2px;top:287.3px;font-size:14px;color:#333;letter-spacing:0.234px;-webkit-text-stroke:0.08px #333">Tables Cataloged</span>
<span class="t" style="left:754.6px;top:333.8px;font-size:20px;color:#2c2c2c;letter-spacing:0.000px;-webkit-text-stroke:0.65px #2c2c2c">0</span>
<span class="t" style="left:947.5px;top:287.3px;font-size:14px;color:#333;letter-spacing:0.177px;-webkit-text-stroke:0.08px #333">Records</span>
<span class="t" style="left:993.8px;top:334.1px;font-size:20px;color:#2c2c2c;letter-spacing:0.527px;-webkit-text-stroke:0.65px #2c2c2c">43.3M</span>
<span class="t" style="left:448.5px;top:435.8px;font-size:20.5px;color:#222;letter-spacing:0.533px;-webkit-text-stroke:0.22px #222">Observability</span>
<span class="t" style="left:448.5px;top:461.5px;font-size:13px;color:#808080;letter-spacing:0.619px">Monitor how your data evolves over time</span>
<span class="t" style="left:464.4px;top:519.9px;font-size:19px;color:#222;letter-spacing:0.810px;-webkit-text-stroke:0.2px #222">Data Volume Over Time</span>
<span class="t" style="left:1084.9px;top:615.1px;font-size:20px;color:#222;letter-spacing:0.124px;-webkit-text-stroke:0.22px #222">No data available</span>
<span class="t" style="left:1017.0px;top:640.3px;font-size:13px;color:#6a6a6a;letter-spacing:0.749px">No data available for the selected timeframe and filters</span>
<span class="t" style="left:464.7px;top:841.4px;font-size:19px;color:#222;letter-spacing:0.926px;-webkit-text-stroke:0.2px #222">Anomalies Over Time</span>
<span class="t" style="left:1112.5px;top:13.4px;font-size:11px;color:#333;letter-spacing:0.000px;font-weight:700">+</span>
<span class="t" style="left:1078.7px;top:14.6px;font-size:10px;color:#333;letter-spacing:-0.069px;font-weight:700;font-family:'DejaVu Sans Condensed','DejaVu Sans',sans-serif">CTRL</span>
<span class="t" style="left:1126.6px;top:14.6px;font-size:10px;color:#333;letter-spacing:0.000px;font-weight:700;font-family:'DejaVu Sans Condensed','DejaVu Sans',sans-serif">K</span>
</div>
</body>
</html>
